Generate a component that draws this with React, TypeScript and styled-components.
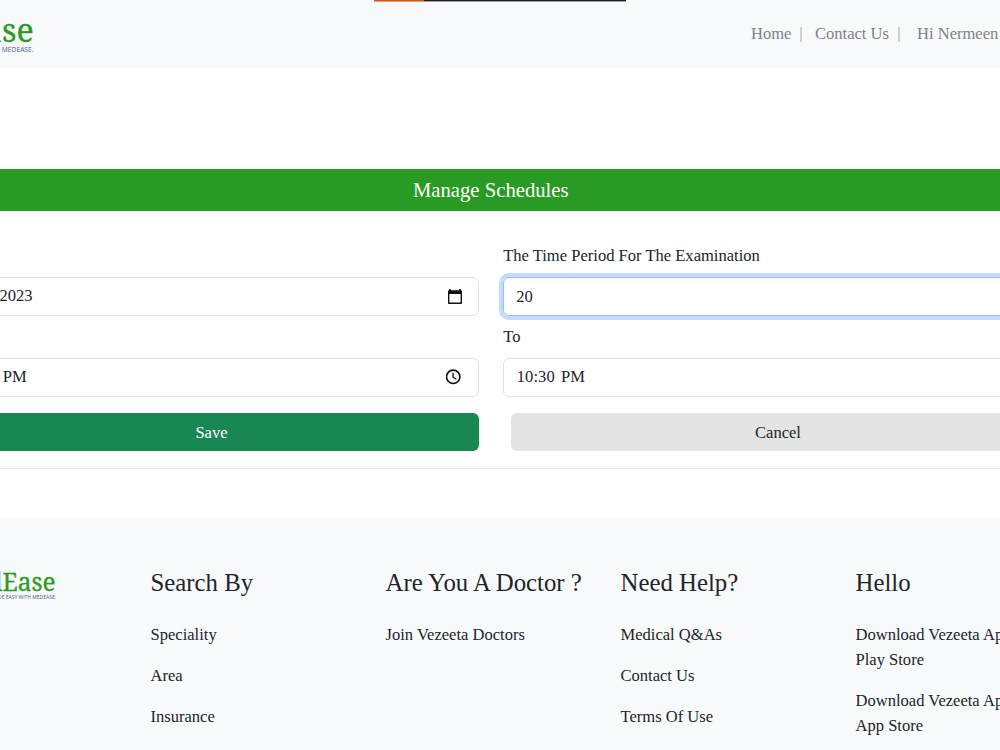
import React from "react";
import styled, { createGlobalStyle } from "styled-components";

const GlobalStyle = createGlobalStyle`
  * { box-sizing: border-box; }
  body {
    margin: 0;
    background: #fff;
    color: #212529;
    font-family: "Liberation Serif", "Times New Roman", serif;
    font-size: 16.56px;
    line-height: 25px;
    overflow: hidden;
  }
`;

const Page = styled.div`
  position: relative;
  width: 1000px;
  height: 750px;
  overflow: hidden;
  white-space: nowrap;
`;

const Progress = styled.div`
  position: absolute;
  top: 0;
  left: 374px;
  width: 252px;
  height: 2px;
  display: flex;
  background: linear-gradient(#1d1d22 50%, #a3a1a3 50%);
`;
const ProgressFill = styled.div`
  width: 50px;
  background: linear-gradient(#d35213 50%, #e2a17f 50%);
`;

const Header = styled.header`
  height: 68px;
  background: #f8f9fb;
  display: flex;
  justify-content: space-between;
`;

const Logo = styled.div<{ $width: number; $top: number }>`
  width: ${(p) => p.$width}px;
  padding-top: ${(p) => p.$top}px;
  flex: none;
  display: flex;
  flex-direction: column;
  align-items: flex-end;
`;
const LogoName = styled.div<{ $size: number }>`
  font-family: "Noto Serif", "DejaVu Serif Condensed", "DejaVu Serif", serif;
  font-size: ${(p) => p.$size}px;
  line-height: 30px;
  color: #2a9b22;
  -webkit-text-stroke: 0.3px #2a9b22;
  transform: scaleX(0.96);
  transform-origin: right;
`;
const LogoTag = styled.div<{ $size: number; $top: number }>`
  font-family: "Open Sans", sans-serif;
  font-size: ${(p) => p.$size}px;
  line-height: 8px;
  margin-top: ${(p) => p.$top}px;
  color: #48608a;
`;

const Nav = styled.nav`
  width: 249px;
  padding-top: 21px;
  display: flex;
  color: #808284;
`;
const NavItem = styled.span<{ $width: number }>`
  width: ${(p) => p.$width}px;
  flex: none;
`;
const Divider = styled.span<{ $after: number }>`
  width: 2px;
  height: 15px;
  margin: 6px ${(p) => p.$after}px 0 -1px;
  background: #d2d1d0;
`;

const Banner = styled.h1`
  margin: 101px 0 0;
  padding-right: 18.5px;
  height: 42px;
  background: #299b24;
  color: #fff;
  font-size: 20.7px;
  font-weight: 400;
  line-height: 42px;
  text-align: center;
`;

const Form = styled.form`
  display: grid;
  grid-template-columns: 534px 534px;
  column-gap: 24.2px;
  width: 1092.2px;
  margin: 32px 0 0 -55.5px;
`;
const Field = styled.div`
  height: 80.5px;
`;
const Label = styled.div`
  height: 34px;
  line-height: 25.8px;
  padding-left: 0.5px;
`;
const Control = styled.div<{ $focus?: boolean }>`
  height: 39px;
  padding: 0 16px 0 12.6px;
  border: 1px solid ${(p) => (p.$focus ? "#94bffc" : "#dee2e6")};
  border-radius: 6px;
  box-shadow: ${(p) => (p.$focus ? "0 0 0 4px #c2dbfe" : "none")};
  display: flex;
  align-items: center;
  justify-content: space-between;
`;
const DateValue = styled.span`
  margin-left: -1px;
  padding-bottom: 2px;
`;
const Time = styled.span`
  display: flex;
  gap: 6px;
  margin-left: 0.4px;
  letter-spacing: 0.1px;
  line-height: 24px;
  padding-bottom: 1px;
`;
const Button = styled.button<{ $primary?: boolean }>`
  height: 38px;
  margin: 9.2px 0 0 ${(p) => (p.$primary ? 0 : 8.3)}px;
  width: 534px;
  padding: 0;
  border: 0;
  border-radius: 6px;
  font: inherit;
  background: ${(p) => (p.$primary ? "#198754" : "#e4e4e4")};
  color: ${(p) => (p.$primary ? "#fff" : "#212529")};
`;
const Rule = styled.hr`
  margin: 16.8px 0 49px;
  border: 0;
  height: 1px;
  background: #e6e7e8;
`;

const Footer = styled.footer`
  height: 240px;
  background: #f8f9fb;
  display: flex;
`;
const Columns = styled.div`
  display: grid;
  grid-template-columns: repeat(4, 235px);
  padding: 49px 0 0 94.5px;
`;
const Heading = styled.h2`
  margin: 0 0 22.7px;
  font-size: 24.8px;
  line-height: 32px;
  font-weight: 400;
`;
const Link = styled.p`
  margin: 0 0 16.3px;
`;

const CalendarIcon = () => (
  <svg width="14" height="16" viewBox="0 0 14 16" fill="#111">
    <path d="M1.200 0h1.700v1.200h8.200V0h1.700v1.200h.1c.6 0 1.100.5 1.100 1.100v11.600c0 .6-.5 1.100-1.100 1.100H1.100C.5 15 0 14.500 0 13.900V2.300c0-.6.5-1.100 1.100-1.100h.1zM1.400 5v8.600h11.200V5z" />
  </svg>
);
const ClockIcon = () => (
  <svg width="16" height="16" viewBox="0 0 16 16" fill="none" stroke="#111">
    <circle cx="7.200" cy="7.800" r="6.7" strokeWidth="1.6" />
    <path d="M7.100 3.800v4.400l3.200 2" strokeWidth="1.3" />
  </svg>
);

const columns = [
  { title: "Search By", links: ["Speciality", "Area", "Insurance"] },
  { title: "Are You A Doctor ?", links: ["Join Vezeeta Doctors"] },
  { title: "Need Help?", links: ["Medical Q&As", "Contact Us", "Terms Of Use"] },
];

export default function App() {
  return (
    <Page>
      <GlobalStyle />
      <Progress><ProgressFill /></Progress>
      <Header>
        <Logo $width={33.5} $top={14}>
          <LogoName $size={33.5}>MedEase</LogoName>
          <LogoTag $size={6.7} $top={1.5}>HEALTHCARE MADE EASY WITH MEDEASE.</LogoTag>
        </Logo>
        <Nav>
          <NavItem $width={50}>Home</NavItem>
          <Divider $after={13} />
          <NavItem $width={84}>Contact Us</NavItem>
          <Divider $after={17} />
          <NavItem $width={83}>Hi Nermeen</NavItem>
        </Nav>
      </Header>
      <Banner>Manage Schedules</Banner>
      <Form>
        <Field>
          <Label>Date</Label>
          <Control><DateValue>12/29/2023</DateValue><CalendarIcon /></Control>
        </Field>
        <Field>
          <Label>The Time Period For The Examination</Label>
          <Control $focus>20</Control>
        </Field>
        <Field>
          <Label>From</Label>
          <Control><Time><span>08:30</span><span>PM</span></Time><ClockIcon /></Control>
        </Field>
        <Field>
          <Label>To</Label>
          <Control><Time><span>10:30</span><span>PM</span></Time></Control>
        </Field>
        <Button type="button" $primary>Save</Button>
        <Button type="button">Cancel</Button>
      </Form>
      <Rule />
      <Footer>
        <Logo $width={56} $top={48}>
          <LogoName $size={25.5}>MedEase</LogoName>
          <LogoTag $size={5} $top={-3}>HEALTHCARE MADE EASY WITH MEDEASE.</LogoTag>
        </Logo>
        <Columns>
          {columns.map((c) => (
            <section key={c.title}>
              <Heading>{c.title}</Heading>
              {c.links.map((l) => <Link key={l}>{l}</Link>)}
            </section>
          ))}
          <section>
            <Heading>Hello</Heading>
            <Link>Download Vezeeta App From<br />Play Store</Link>
            <Link>Download Vezeeta App From<br />App Store</Link>
          </section>
        </Columns>
      </Footer>
    </Page>
  );
}
